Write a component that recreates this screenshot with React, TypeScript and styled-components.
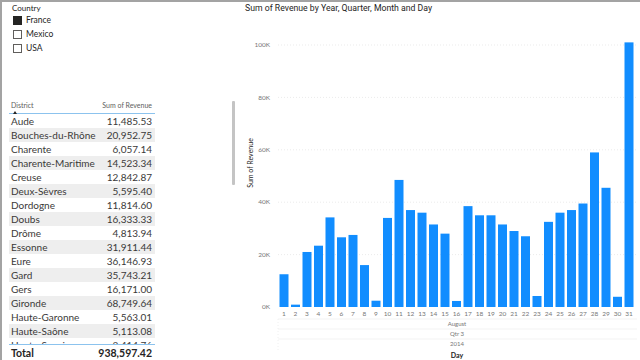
import React from "react";
import styled, { createGlobalStyle } from "styled-components";

const GlobalStyle = createGlobalStyle`
  html, body { margin: 0; padding: 0; background: #fff; }
  body { font-family: "Lato", "Open Sans", sans-serif; color: #252423; }
  * { box-sizing: border-box; }
`;

const countries = [
  { name: "France", checked: true },
  { name: "Mexico", checked: false },
  { name: "USA", checked: false },
];

const districts: [string, string][] = [
  ["Aude", "11,485.53"],
  ["Bouches-du-Rhône", "20,952.75"],
  ["Charente", "6,057.14"],
  ["Charente-Maritime", "14,523.34"],
  ["Creuse", "12,842.87"],
  ["Deux-Sèvres", "5,595.40"],
  ["Dordogne", "11,814.60"],
  ["Doubs", "16,333.33"],
  ["Drôme", "4,813.94"],
  ["Essonne", "31,911.44"],
  ["Eure", "36,146.93"],
  ["Gard", "35,743.21"],
  ["Gers", "16,171.00"],
  ["Gironde", "68,749.64"],
  ["Haute-Garonne", "5,563.01"],
  ["Haute-Saône", "5,113.08"],
  ["Haute-Savoie", "3,414.76"],
];

// revenue per day of August 2014, in thousands
const revenue = [
  12.5, 0.9, 21, 23.4, 34.2, 26.6, 27.5, 16, 2.4, 34, 48.5, 37, 36, 31.5, 28,
  2.3, 38.5, 35, 35, 31.5, 29, 27, 4.2, 32.5, 36, 37, 39.5, 59, 45.5, 3.9, 101,
];

const Canvas = styled.div`
  width: 640px;
  height: 360px;
  overflow: hidden;
  display: grid;
  grid-template-columns: 238px 1fr;
  border-top: 2px solid #a3a3a3;
  border-left: 2px solid #a3a3a3;
  background: #fff;
`;

const LeftColumn = styled.div`
  display: flex;
  flex-direction: column;
  min-height: 0;
`;

const Slicer = styled.div`
  height: 95px;
  padding: 1px 0 0 10px;
`;

const SlicerTitle = styled.div`
  font-size: 8px;
  line-height: 10px;
  color: #252423;
`;

const Options = styled.div`
  display: flex;
  flex-direction: column;
  gap: 4px;
  margin-top: 2px;
`;

const Option = styled.div`
  display: flex;
  align-items: center;
  height: 10px;
  font-size: 8.5px;
  color: #252423;
`;

const Check = styled.span<{ $on: boolean }>`
  width: 9px;
  height: 9px;
  margin: 0 4px 0 1px;
  border: 1px solid ${(p) => (p.$on ? "#252423" : "#605e5c")};
  background: ${(p) => (p.$on ? "#252423" : "#fff")};
`;

const TableVisual = styled.div`
  flex: 1;
  display: flex;
  padding-left: 7px;
  min-height: 0;
`;

const TableBox = styled.div`
  width: 146px;
  display: flex;
  flex-direction: column;
`;

const Header = styled.div`
  height: 17px;
  display: flex;
  justify-content: space-between;
  padding: 3px 3px 0 2px;
  border-bottom: 1px solid #8cc3ee;
  font-size: 7px;
  line-height: 10px;
  color: #605e5c;
`;

const SortHead = styled.div`
  display: flex;
  flex-direction: column;
`;

const SortArrow = styled.span`
  width: 0;
  height: 0;
  margin: 1px 0 0 2px;
  border-left: 2.5px solid transparent;
  border-right: 2.5px solid transparent;
  border-bottom: 3px solid #252423;
`;

const Body = styled.div`
  height: 230px;
  overflow: hidden;
`;

const Row = styled.div<{ $alt: boolean }>`
  height: 14px;
  display: flex;
  justify-content: space-between;
  align-items: center;
  padding: 0 3px 0 2px;
  font-size: 10px;
  color: #3a3938;
  background: ${(p) => (p.$alt ? "#eeeeee" : "#ffffff")};
`;

const TotalRow = styled.div`
  position: relative;
  height: 16px;
  display: flex;
  justify-content: space-between;
  align-items: center;
  padding: 0 3px 0 2px;
  border-top: 1px solid #8cc3ee;
  background: #fff;
  font-size: 10.5px;
  font-weight: 700;
  color: #252423;
`;

const ScrollThumb = styled.div`
  width: 3px;
  height: 84px;
  margin: 4px 5px 0 auto;
  border-radius: 1px;
  background: #c4c4c4;
`;

const ChartPanel = styled.div`
  display: flex;
  flex-direction: column;
`;

const ChartTitle = styled.div`
  height: 12px;
  padding: 1px 0 0 5px;
  font-family: "Roboto", "Open Sans", sans-serif;
  font-size: 8.7px;
  line-height: 10px;
  color: #252423;
`;

const Plot = styled.svg`
  display: block;
  font-family: "Lato", "Open Sans", sans-serif;
`;

const AxisText = styled.text<{ $size?: number }>`
  font-size: ${(p) => p.$size ?? 6.5}px;
  fill: #777777;
`;

const AxisTitle = styled.text`
  font-size: 7px;
  fill: #252423;
`;

const BarRect = styled.rect`
  fill: #118dff;
`;

// page coordinates -> svg coordinates
const OX = 240;
const OY = 14;
const BASE = 307;
const PX_PER_K = 2.62;

const RevenueChart = () => {
  const ticks = [0, 20, 40, 60, 80, 100];
  return (
    <Plot width={400} height={346} viewBox="0 0 400 346">
      {ticks.map((t) => {
        const y = BASE - t * PX_PER_K - OY;
        return (
          <g key={t}>
            {t > 0 && (
              <line
                x1={278 - OX}
                x2={637 - OX}
                y1={y}
                y2={y}
                stroke="#e6e6e6"
                strokeWidth={0.8}
                strokeDasharray="1 2"
              />
            )}
            <AxisText x={270 - OX} y={y + 2.2} textAnchor="end">
              {t}K
            </AxisText>
          </g>
        );
      })}
      <AxisTitle
        transform={`translate(${253 - OX},${163 - OY}) rotate(-90)`}
        textAnchor="middle"
      >
        Sum of Revenue
      </AxisTitle>
      {revenue.map((v, i) => {
        const cx = 284 + i * 11.5 - OX;
        const h = v * PX_PER_K;
        return (
          <g key={i}>
            <BarRect x={cx - 4.5} y={BASE - h - OY} width={9} height={h} />
            <AxisText x={cx} y={315.5 - OY} textAnchor="middle">
              {i + 1}
            </AxisText>
          </g>
        );
      })}
      <line x1={278 - OX} x2={278 - OX} y1={319 - OY} y2={350 - OY} stroke="#ececec" strokeWidth={0.8} strokeDasharray="1 2" />
      {[319, 329, 339].map((y) => (
        <line key={y} x1={278 - OX} x2={637 - OX} y1={y - OY} y2={y - OY} stroke="#f0f0f0" strokeWidth={0.8} />
      ))}
      <AxisText x={457 - OX} y={325.5 - OY} textAnchor="middle" $size={6}>
        August
      </AxisText>
      <AxisText x={457 - OX} y={335.5 - OY} textAnchor="middle" $size={6}>
        Qtr 3
      </AxisText>
      <AxisText x={457 - OX} y={345.5 - OY} textAnchor="middle" $size={6}>
        2014
      </AxisText>
      <AxisTitle x={457 - OX} y={357.5 - OY} textAnchor="middle" fontWeight={700}>
        Day
      </AxisTitle>
    </Plot>
  );
};

const App = () => {
  return (
    <>
      <GlobalStyle />
      <Canvas>
        <LeftColumn>
          <Slicer>
            <SlicerTitle>Country</SlicerTitle>
            <Options>
              {countries.map((c) => (
                <Option key={c.name}>
                  <Check $on={c.checked} />
                  {c.name}
                </Option>
              ))}
            </Options>
          </Slicer>
          <TableVisual>
            <TableBox>
              <Header>
                <SortHead>
                  District
                  <SortArrow />
                </SortHead>
                <span>Sum of Revenue</span>
              </Header>
              <Body>
                {districts.map(([name, value], i) => (
                  <Row key={name} $alt={i % 2 === 1}>
                    <span>{name}</span>
                    <span>{value}</span>
                  </Row>
                ))}
              </Body>
              <TotalRow>
                <span>Total</span>
                <span>938,597.42</span>
              </TotalRow>
            </TableBox>
            <ScrollThumb />
          </TableVisual>
        </LeftColumn>
        <ChartPanel>
          <ChartTitle>Sum of Revenue by Year, Quarter, Month and Day</ChartTitle>
          <RevenueChart />
        </ChartPanel>
      </Canvas>
    </>
  );
};

export default App;
